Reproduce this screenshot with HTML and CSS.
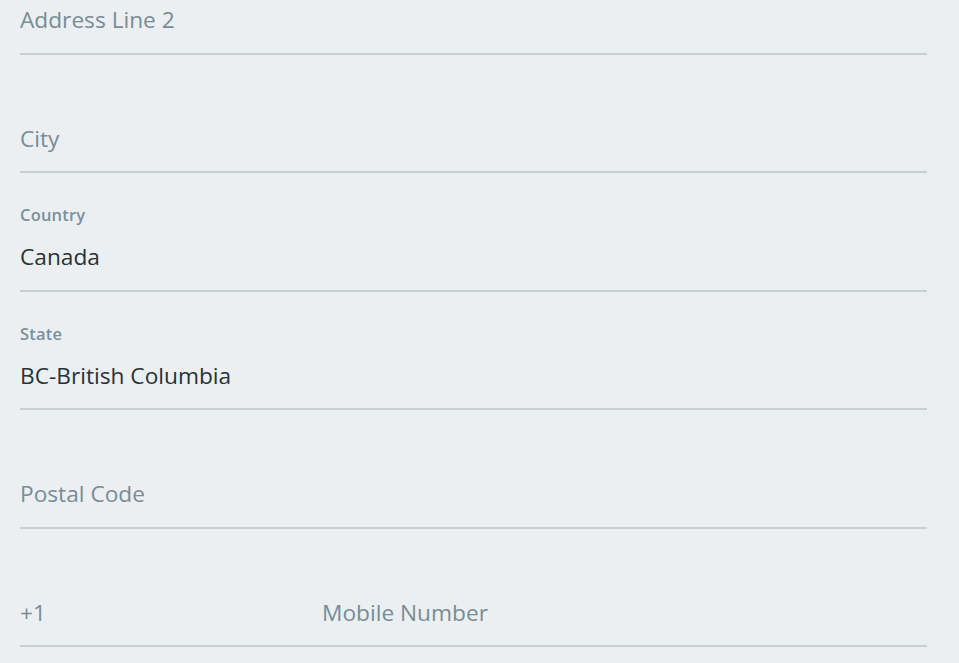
FILE: index.html
```html
<!DOCTYPE html>
<html lang="en">
<head>
    <meta charset="UTF-8">
    <meta name="viewport" content="width=device-width, initial-scale=1.0">
    <title>Address</title>
    <link rel="stylesheet" href="styles.css">
</head>
<body>

    <form class="address-form">
        <div class="field">
            <label class="field-label"></label>
            <input class="field-input" type="text" placeholder="Address Line 2">
        </div>

        <div class="field">
            <label class="field-label"></label>
            <input class="field-input" type="text" placeholder="City">
        </div>

        <div class="field">
            <label class="field-label" for="country">Country</label>
            <input class="field-input" type="text" id="country" value="Canada">
        </div>

        <div class="field">
            <label class="field-label" for="state">State</label>
            <input class="field-input" type="text" id="state" value="BC-British Columbia">
        </div>

        <div class="field">
            <label class="field-label"></label>
            <input class="field-input" type="text" placeholder="Postal Code">
        </div>

        <div class="field">
            <label class="field-label"></label>
            <div class="phone-row">
                <input class="field-input" type="text" placeholder="+1">
                <input class="field-input" type="tel" placeholder="Mobile Number">
            </div>
        </div>
    </form>

</body>
</html>
```

FILE: styles.css
```css
body {
    font-family: "Open Sans", "Noto Sans", sans-serif;
    background-color: #eceff1;
    margin: 0;
    overflow: hidden;
}
.address-form {
    margin-top: -64px;
    padding: 0 32px 0 20px;
}
.field {
    display: flex;
    flex-direction: column;
    height: 118.5px;
    box-sizing: border-box;
    padding-top: 32px;
    border-bottom: 2px solid #c8cfd3;
}
.field-label {
    display: block;
    height: 20px;
    line-height: 20px;
    margin-bottom: 17px;
    font-size: 16.5px;
    letter-spacing: 0.2px;
    font-weight: 600;
    color: #78909c;
}
.field-input {
    display: block;
    width: 100%;
    box-sizing: border-box;
    height: 30px;
    line-height: 30px;
    padding: 0;
    border: none;
    background: transparent;
    outline: none;
    font-family: inherit;
    font-size: 22.7px;
    color: #263238;
}
.field-input::placeholder {
    color: #778c96;
    opacity: 1;
}
.phone-row {
    display: grid;
    grid-template-columns: 302px 1fr;
}
```
